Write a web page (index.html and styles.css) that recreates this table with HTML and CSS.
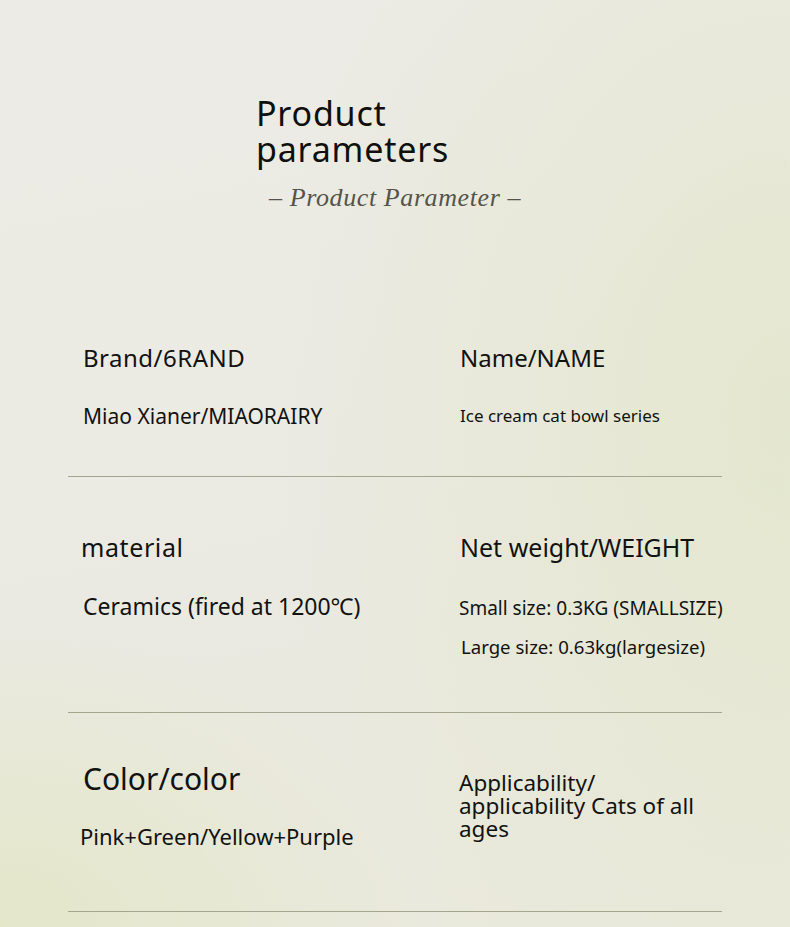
FILE: index.html
```html
<!DOCTYPE html>
<html lang="en">
<head>
<meta charset="utf-8">
<title>Product parameters</title>
<link rel="stylesheet" href="styles.css">
</head>
<body>
<div class="page">
  <header class="header">
    <h1 class="title">Product<br>parameters</h1>
    <div class="subtitle">– Product Parameter –</div>
  </header>

  <section class="row row-1">
    <div class="cell">
      <div class="label l-brand">Brand/6RAND</div>
      <div class="value v-brand">Miao Xianer/MIAORAIRY</div>
    </div>
    <div class="cell cell-right">
      <div class="label">Name/NAME</div>
      <div class="value v-name">Ice cream cat bowl series</div>
    </div>
  </section>

  <section class="row row-2">
    <div class="cell">
      <div class="label label-2 l-material">material</div>
      <div class="value v-ceramics">Ceramics (fired at 1200℃)</div>
    </div>
    <div class="cell cell-right">
      <div class="label label-2">Net weight/WEIGHT</div>
      <div class="value v-small">Small size: 0.3KG (SMALLSIZE)</div>
      <div class="value v-large">Large size: 0.63kg(largesize)</div>
    </div>
  </section>

  <section class="row row-3">
    <div class="cell">
      <div class="label label-3">Color/color</div>
      <div class="value v-color">Pink+Green/Yellow+Purple</div>
    </div>
    <div class="cell cell-right">
      <div class="label-app">Applicability/<br>applicability Cats of all<br>ages</div>
    </div>
  </section>
</div>
</body>
</html>
```

FILE: styles.css
```css
html, body {
  margin: 0;
  padding: 0;
}
body {
  width: 790px;
  height: 927px;
  overflow: hidden;
  font-family: "Noto Sans", "Open Sans", sans-serif;
  color: #121210;
  background:
    radial-gradient(ellipse 520px 700px at 100% 45%, rgba(226, 230, 200, 0.75), rgba(226, 230, 200, 0) 100%),
    radial-gradient(ellipse 420px 300px at 0% 100%, rgba(226, 230, 196, 0.8), rgba(226, 230, 196, 0) 100%),
    linear-gradient(170deg, #ecebe5 0%, #ebeae3 50%, #e9e9dc 100%);
}
.page {
  width: 790px;
}
.header {
  height: 300px;
  box-sizing: border-box;
  padding-top: 95px;
}
.title {
  margin: 0 0 0 256px;
  font-size: 34px;
  line-height: 36px;
  font-weight: 400;
  letter-spacing: 0.8px;
  color: #0f100c;
}
.subtitle {
  margin: 16px 0 0 269px;
  font-family: "Liberation Serif", "DejaVu Serif", serif;
  font-style: italic;
  font-size: 26px;
  line-height: 30px;
  color: #55544b;
  letter-spacing: 0.6px;
}
.row {
  margin-left: 68px;
  width: 654px;
  display: grid;
  grid-template-columns: 392px 1fr;
  border-bottom: 1px solid #a4a690;
}
.cell {
  padding-left: 15px;
}
.cell-right {
  padding-left: 0;
}
.row-1 {
  padding: 43px 0 47px;
}
.row-2 {
  padding: 55px 0 52px;
}
.row-3 {
  padding: 48px 0 61px;
}
.label {
  font-size: 24px;
  line-height: 30px;
}
.l-brand {
  letter-spacing: 0.5px;
}
.label-2 {
  font-size: 25px;
}
.l-material {
  margin-left: -2px;
  letter-spacing: 0.6px;
}
.label-3 {
  font-size: 30px;
  line-height: 36px;
}
.value {
  white-space: nowrap;
}
.v-brand {
  margin-top: 30px;
  font-size: 21px;
  line-height: 26px;
}
.v-name {
  margin-top: 30px;
  font-size: 17px;
  line-height: 26px;
}
.v-ceramics {
  margin-top: 30px;
  font-size: 23px;
  line-height: 28px;
}
.v-small {
  margin-top: 33px;
  margin-left: -1px;
  font-size: 19px;
  line-height: 26px;
}
.v-large {
  margin-top: 13px;
  margin-left: 1px;
  font-size: 18.6px;
  line-height: 26px;
}
.v-color {
  margin-top: 25px;
  margin-left: -3px;
  font-size: 22px;
  line-height: 28px;
}
.label-app {
  margin-top: 10px;
  margin-left: -1px;
  font-size: 22.5px;
  line-height: 23px;
}
```
